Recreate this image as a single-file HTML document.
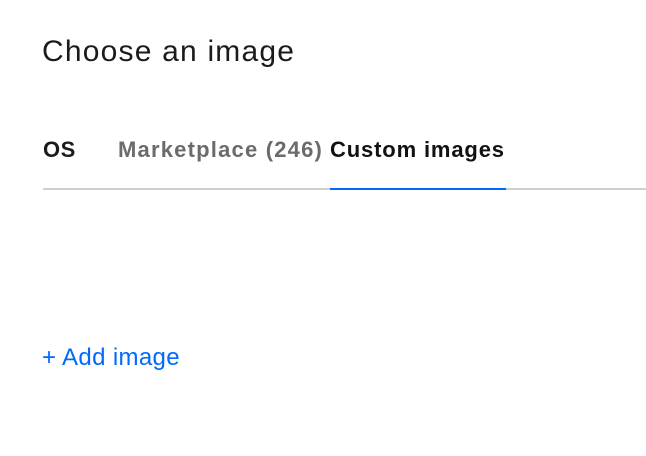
<!DOCTYPE html>
<html><head><style>
html,body{margin:0;padding:0;background:#fff;width:646px;height:456px;overflow:hidden;font-family:"Liberation Sans",sans-serif;}
.a{position:absolute;white-space:nowrap;}
</style></head><body>
<div class="a" style="left:42px;top:35px;font-size:30px;color:#1b1b1b;letter-spacing:1.2px;line-height:34px;">Choose an image</div>
<div class="a" style="left:43px;top:136px;font-size:22px;font-weight:bold;color:#1b1b1b;letter-spacing:0.5px;line-height:28px;">OS</div>
<div class="a" style="left:118px;top:136px;font-size:22px;font-weight:bold;color:#6b6b6b;letter-spacing:1.2px;line-height:28px;">Marketplace (246)</div>
<div class="a" style="left:330px;top:136px;font-size:22px;font-weight:bold;color:#111;letter-spacing:0.85px;line-height:28px;">Custom images</div>
<div class="a" style="left:43px;top:188px;width:603px;height:2px;background:#cfcfcf;"></div>
<div class="a" style="left:330px;top:188px;width:176px;height:2px;background:#0069ff;"></div>
<div class="a" style="left:42px;top:344px;font-size:24px;color:#0069ff;letter-spacing:0.35px;line-height:28px;">+ Add image</div>
</body></html>
